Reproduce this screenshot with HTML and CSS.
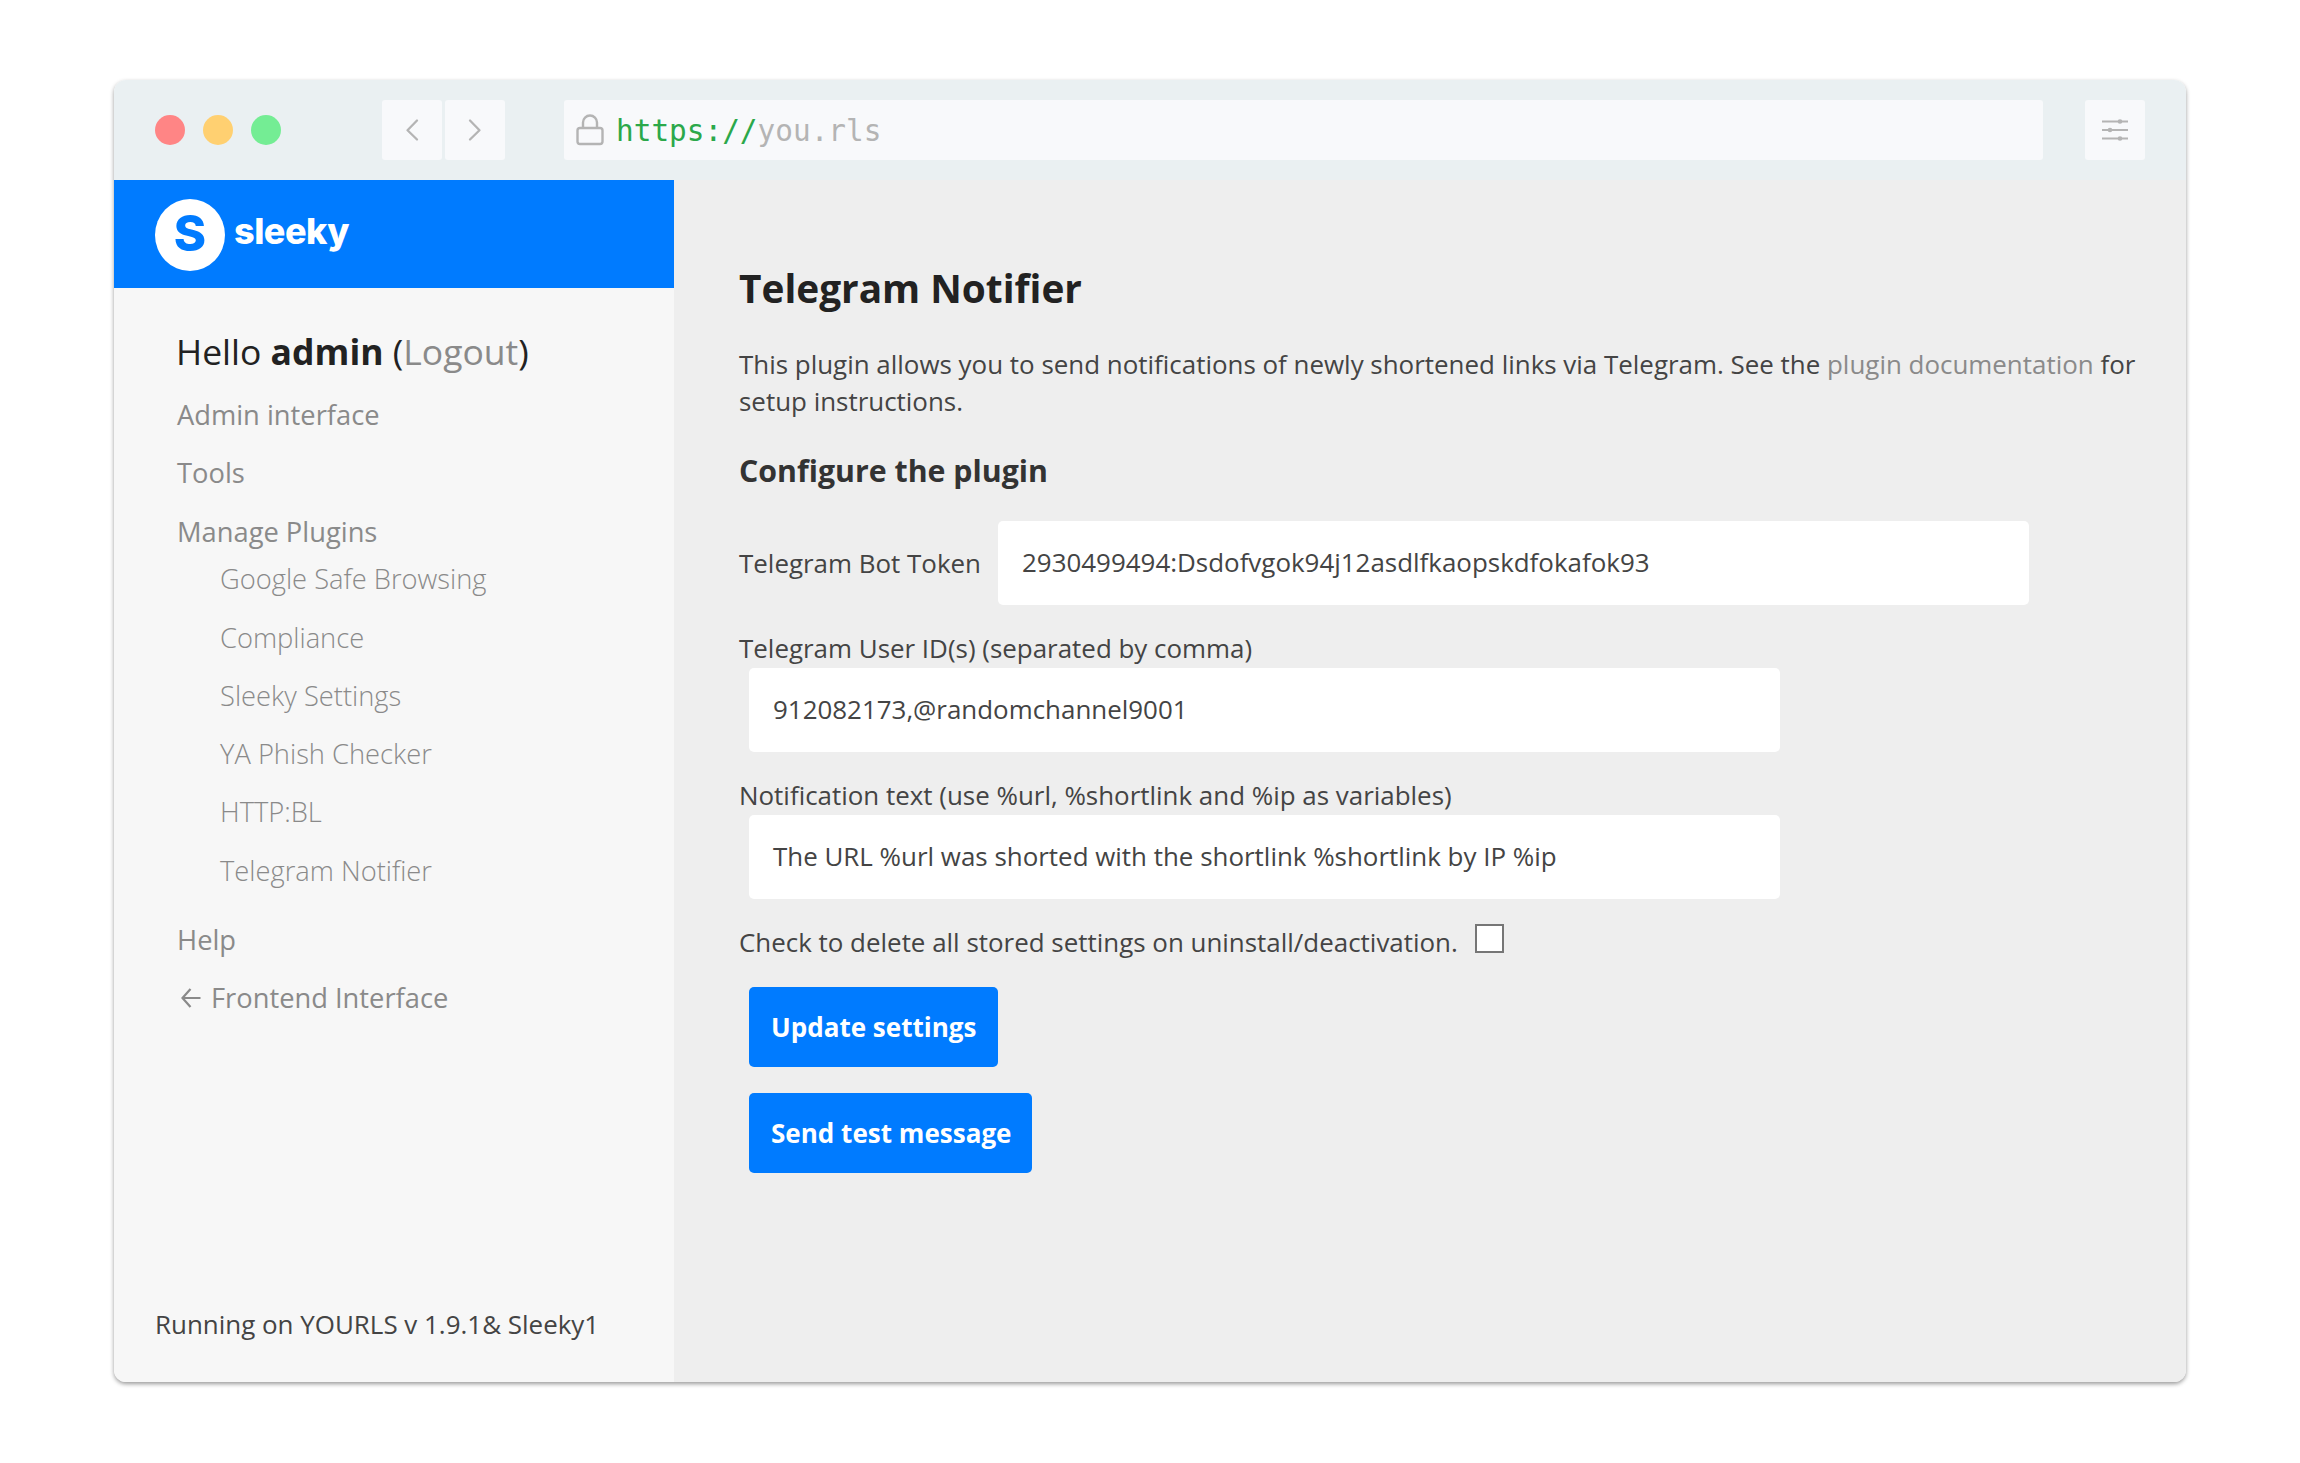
FILE: index.html
```html
<!DOCTYPE html>
<html lang="en">
<head>
<meta charset="utf-8">
<title>Telegram Notifier</title>
<link rel="stylesheet" href="styles.css">
</head>
<body>
<div class="window">
  <header class="chrome">
    <div class="dots"><span class="dot dot-red"></span><span class="dot dot-yellow"></span><span class="dot dot-green"></span></div>
    <div class="nav">
      <span class="nav-button"><svg width="60" height="60" viewBox="0 0 60 60"><path d="M35 20.500L25.500 30.200L35 39.500"/></svg></span>
      <span class="nav-button"><svg width="60" height="60" viewBox="0 0 60 60"><path d="M25 20.500L34.500 30.200L25 39.500"/></svg></span>
    </div>
    <div class="address">
      <svg class="lock" width="28" height="32" viewBox="0 0 28 32"><rect x="1.500" y="14" width="25" height="16" rx="2.500"/><path d="M7 14V8.500a7 7 0 0 1 14 0V14"/></svg>
      <span class="url"><span class="scheme">https://</span>you.rls</span>
    </div>
    <span class="nav-button settings"><svg width="60" height="60" viewBox="0 0 60 60"><path d="M17 21.500H43M17 30H43M17 38.500H43"/><circle cx="35" cy="21.500" r="2.300"/><circle cx="25" cy="30" r="2.300"/><circle cx="35" cy="38.500" r="2.300"/></svg></span>
  </header>
  <div class="page">
    <aside class="sidebar">
      <div class="brand"><span class="brand-mark">S</span><span class="brand-name">sleeky</span></div>
      <div class="menu">
        <p class="hello">Hello <strong>admin</strong> (<a>Logout</a>)</p>
        <ul class="links">
          <li><a>Admin interface</a></li>
          <li><a>Tools</a></li>
          <li><a>Manage Plugins</a>
            <ul class="sublinks">
              <li><a>Google Safe Browsing</a></li>
              <li><a>Compliance</a></li>
              <li><a>Sleeky Settings</a></li>
              <li><a>YA Phish Checker</a></li>
              <li><a>HTTP:BL</a></li>
              <li><a>Telegram Notifier</a></li>
            </ul>
          </li>
          <li><a>Help</a></li>
          <li class="frontend"><svg class="arrow" width="20" height="20" viewBox="0 0 20 20"><path d="M19.500 10H1.500M9.500 1L1.500 10L9.500 19"/></svg><a>Frontend Interface</a></li>
        </ul>
      </div>
      <p class="version">Running on YOURLS v 1.9.1&amp; Sleeky1</p>
    </aside>
    <main class="content">
      <h2>Telegram Notifier</h2>
      <p class="intro">This plugin allows you to send notifications of newly shortened links via Telegram. See the <a>plugin documentation</a> for<br>setup instructions.</p>
      <h3>Configure the plugin</h3>
      <div class="field field-inline"><label>Telegram Bot Token</label><div class="input">2930499494:Dsdofvgok94j12asdlfkaopskdfokafok93</div></div>
      <div class="field"><label>Telegram User ID(s) (separated by comma)</label><div class="input">912082173,@randomchannel9001</div></div>
      <div class="field"><label>Notification text (use %url, %shortlink and %ip as variables)</label><div class="input">The URL %url was shorted with the shortlink %shortlink by IP %ip</div></div>
      <div class="check"><label>Check to delete all stored settings on uninstall/deactivation.</label><span class="checkbox"></span></div>
      <button class="button update">Update settings</button>
      <button class="button test">Send test message</button>
    </main>
  </div>
</div>
</body>
</html>
```
FILE: styles.css
```css
* { box-sizing: border-box; }
body { margin: 0; min-height: 100vh; padding: 80px 114px; background: #fff; color: #444; font: 27.3px/40px "Open Sans", sans-serif; }
h2, h3, p, ul { margin: 0; padding: 0; }
ul { list-style: none; }
a { color: #8a8a8a; }
.window { width: 2072px; height: 1302px; border-radius: 12px; overflow: hidden; box-shadow: 0 2px 4px rgba(0, 0, 0, .4); }
.chrome { height: 100px; background: #eaf0f2; display: flex; align-items: center; }
.dots { display: flex; gap: 18px; margin-left: 41px; width: 227px; }
.dot { width: 30px; height: 30px; border-radius: 50%; }
.dot-red { background: #ff8585; }
.dot-yellow { background: #ffd071; }
.dot-green { background: #74ed94; }
.nav { display: flex; gap: 3px; }
.nav-button { width: 60px; height: 60px; border-radius: 3px; background: #f8f9fb; }
.nav-button svg { display: block; fill: none; stroke: #b4b4b4; stroke-width: 2.3; stroke-linecap: round; stroke-linejoin: round; }
.address { width: 1479px; height: 60px; margin-left: 59px; padding-left: 12px; border-radius: 3px; background: #f8f9fb; display: flex; align-items: center; }
.lock { fill: none; stroke: #b4b4b4; stroke-width: 2.4; }
.url { margin-left: 12px; padding-top: 1px; font: 29.4px/60px "DejaVu Sans Mono", monospace; color: #b4b4b4; white-space: pre; }
.scheme { color: #2ba84a; }
.settings { margin-left: 42px; }
.settings svg { stroke: none; fill: #b4b4b4; }
.settings svg path { stroke: #b4b4b4; stroke-width: 2; stroke-linecap: butt; }
.page { height: 1202px; display: flex; }
.sidebar { flex: none; width: 560px; background: #f7f7f7; display: flex; flex-direction: column; }
.brand { height: 108px; padding: 2px 0 0 41px; background: #007bff; display: flex; align-items: center; color: #fff; font-family: Inter, sans-serif; font-weight: 800; }
.brand-mark { width: 70px; height: 72px; border-radius: 50%; background: #fff; color: #007bff; font-size: 49px; line-height: 70px; text-align: center; }
.brand-name { margin: -8px 0 0 9px; font-size: 36px; letter-spacing: -.5px; }
.menu { padding: 38.200px 0 0 63px; }
.hello { margin: 0 0 19px -1px; font-size: 35.500px; line-height: 50px; color: #222; }
.links, .sublinks { display: flex; flex-direction: column; gap: 18.3px; }
.sublinks { margin: 7.5px 0 11px 43px; font-weight: 300; }
.frontend { display: flex; align-items: center; }
.arrow { margin-left: 4px; fill: none; stroke: #8a8a8a; stroke-width: 2.2; }
.frontend a { margin-left: 10px; }
.version { margin: auto 0 38px 41px; font-size: 25.950px; }
.content { flex: 1; min-width: 0; background: #eee; padding: 82.600px 0 0 65px; font-size: 25.930px; }
h2 { margin-bottom: 33px; font-size: 38.800px; line-height: 50px; color: #222; }
.intro { margin-bottom: 31px; line-height: 37px; white-space: nowrap; }
h3 { margin-bottom: 30px; font-size: 30.300px; line-height: 40px; color: #333; }
.field { margin-bottom: 23px; }
.field label { display: block; }
.input { width: 1031px; height: 84px; margin-left: 10px; padding-left: 24px; background: #fff; border-radius: 5px; line-height: 83px; }
.field-inline { display: flex; align-items: center; }
.field-inline label { width: 259px; }
.field-inline .input { margin-left: 0; }
.check { display: flex; align-items: center; margin-bottom: 25px; }
.check label { width: 736px; }
.checkbox { width: 29px; height: 29px; margin-top: -6px; background: #fff; border: 2px solid #767676; }
.button { display: block; height: 80px; margin: 0 0 26px 10px; padding: 0 22px; border: 0; border-radius: 5px; background: #007bff; color: #fff; font: 700 26.050px/80px "Open Sans", sans-serif; text-align: left; white-space: nowrap; }
.update { width: 249px; }
.test { width: 283px; }
```
